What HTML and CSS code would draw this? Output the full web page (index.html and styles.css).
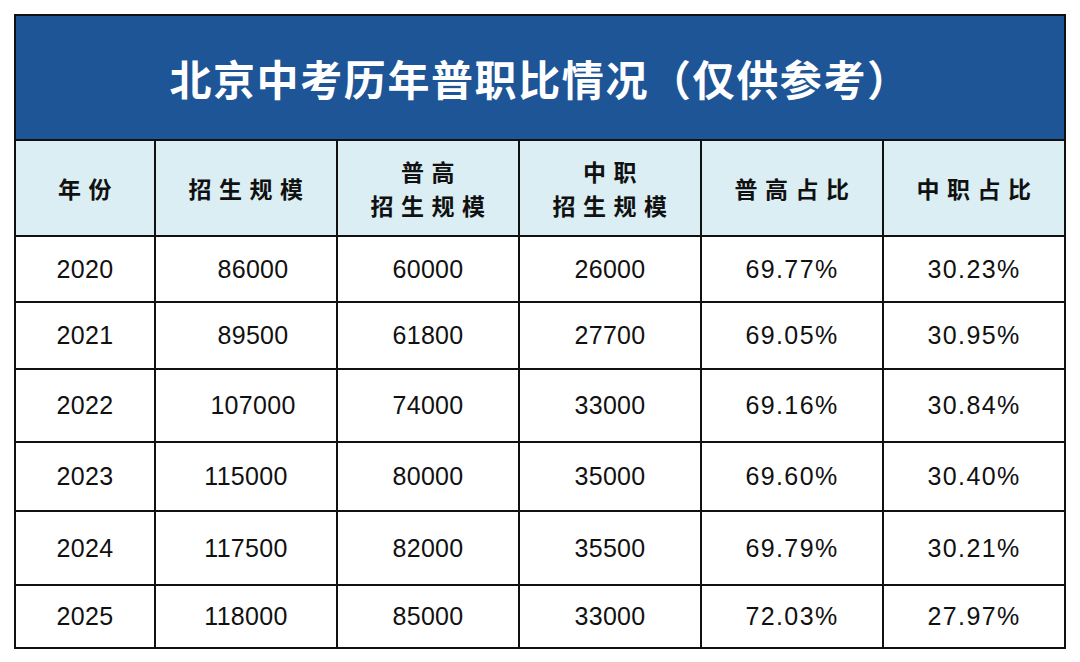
FILE: index.html
```html
<!DOCTYPE html>
<html lang="zh">
<head>
<meta charset="utf-8">
<title>北京中考历年普职比情况</title>
<link rel="stylesheet" href="styles.css">
</head>
<body>
<table class="sheet">
  <colgroup>
    <col class="c-year">
    <col class="c-num">
    <col class="c-num">
    <col class="c-num">
    <col class="c-num">
    <col class="c-num">
  </colgroup>
  <thead>
    <tr class="title-row"><th colspan="6" class="title">北京中考历年普职比情况（仅供参考）</th></tr>
    <tr class="head-row">
      <th>年份</th>
      <th>招生规模</th>
      <th><span class="hl">普高</span><span class="hl">招生规模</span></th>
      <th><span class="hl">中职</span><span class="hl">招生规模</span></th>
      <th>普高占比</th>
      <th>中职占比</th>
    </tr>
  </thead>
  <tbody>
    <tr class="r1"><td>2020</td><td class="shift">86000</td><td>60000</td><td>26000</td><td class="pct">69.77%</td><td class="pct">30.23%</td></tr>
    <tr class="r2"><td>2021</td><td class="shift">89500</td><td>61800</td><td>27700</td><td class="pct">69.05%</td><td class="pct">30.95%</td></tr>
    <tr class="r3"><td>2022</td><td class="shift">107000</td><td>74000</td><td>33000</td><td class="pct">69.16%</td><td class="pct">30.84%</td></tr>
    <tr class="r4"><td>2023</td><td>115000</td><td>80000</td><td>35000</td><td class="pct">69.60%</td><td class="pct">30.40%</td></tr>
    <tr class="r5"><td>2024</td><td>117500</td><td>82000</td><td>35500</td><td class="pct">69.79%</td><td class="pct">30.21%</td></tr>
    <tr class="r6"><td>2025</td><td>118000</td><td>85000</td><td>33000</td><td class="pct">72.03%</td><td class="pct">27.97%</td></tr>
  </tbody>
</table>
</body>
</html>
```
FILE: styles.css
```css
html, body {
  margin: 0;
  padding: 0;
  background: #ffffff;
}
body {
  padding: 14px 0 0 14px;
}
.sheet {
  border-collapse: collapse;
  table-layout: fixed;
  width: 1052px;
  border: 2px solid #1a1a1a;
  font-family: "Liberation Sans", Arial, "Noto Sans CJK SC", sans-serif;
  color: #111111;
}
.c-year { width: 140px; }
.c-num { width: 182px; }
.sheet th, .sheet td {
  border: 2px solid #111111;
  text-align: center;
  vertical-align: middle;
  padding: 0;
}
.title-row { height: 125px; }
.title {
  background: #1e5597;
  color: #ffffff;
  font-family: "Noto Sans CJK SC", sans-serif;
  font-weight: 700;
  font-size: 42px;
  letter-spacing: 1.6px;
  padding: 8px 22px 0 0;
}
.head-row { height: 96px; }
.head-row th {
  background: #daeef3;
  font-family: "Noto Sans CJK SC", sans-serif;
  font-weight: 700;
  font-size: 23px;
  line-height: 34px;
  letter-spacing: 7.5px;
  color: #111111;
  padding-left: 7px;
}
.hl {
  display: block;
  line-height: 34px;
}
.sheet td {
  font-size: 25px;
  letter-spacing: 0.3px;
}
.sheet td.pct {
  letter-spacing: 1.4px;
}
.sheet td.shift {
  padding-left: 14px;
}
.r1 { height: 66px; }
.r2 { height: 67px; }
.r3 { height: 73px; }
.r4 { height: 69px; }
.r5 { height: 74px; }
.r6 { height: 63px; }
```
